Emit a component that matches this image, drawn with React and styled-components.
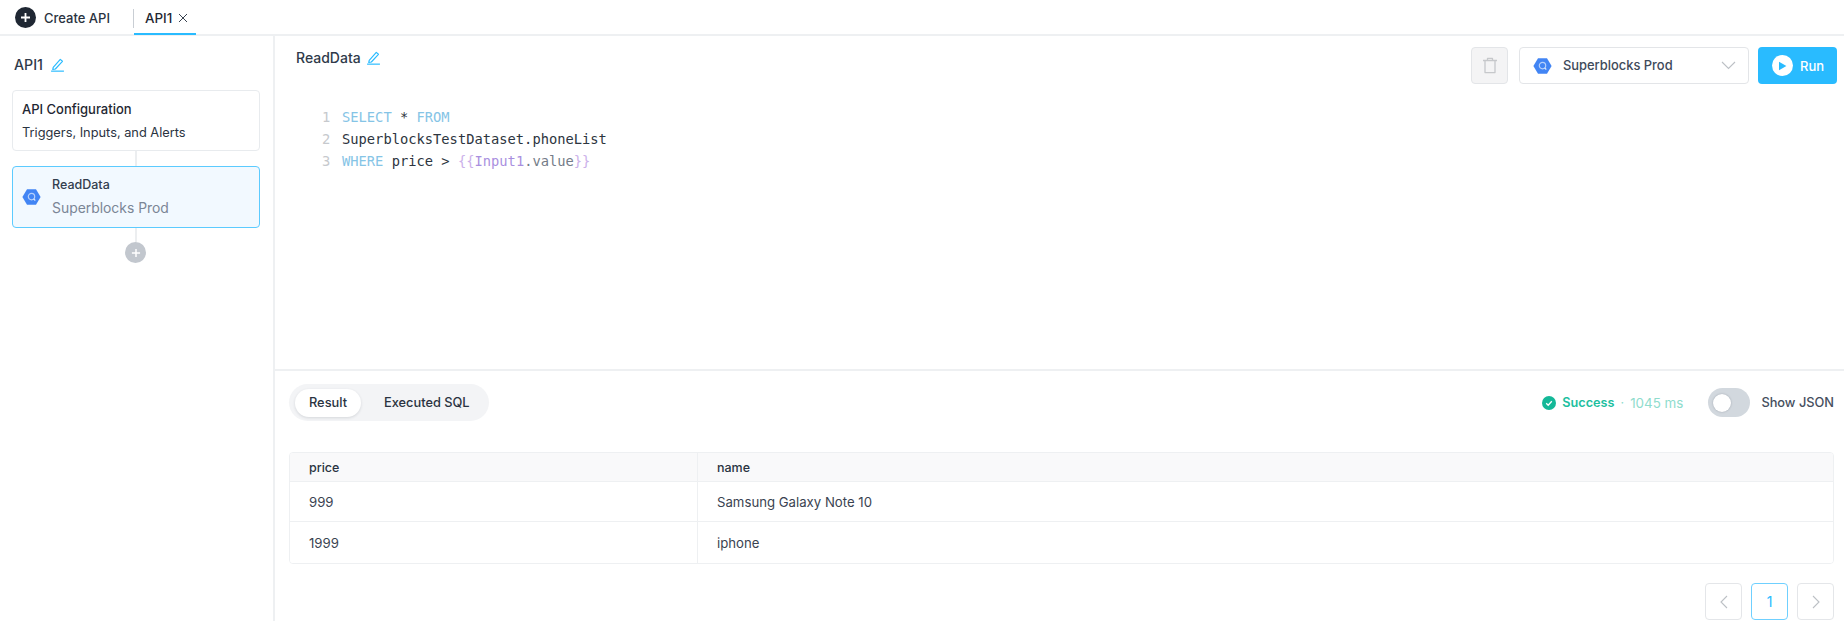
import React from "react";
import styled, { createGlobalStyle } from "styled-components";

const Global = createGlobalStyle`
  html, body { margin: 0; padding: 0; background: #fff; }
  body { font-family: Inter, "Noto Sans", sans-serif; color: #1f2733; -webkit-font-smoothing: antialiased; }
  * { box-sizing: border-box; }
`;

const Page = styled.div`
  width: 1844px; height: 621px; overflow: hidden; display: flex; flex-direction: column; background: #fff;
`;
const TopBar = styled.header`
  height: 36px; flex: none; display: flex; align-items: stretch; padding-left: 15px; border-bottom: 2px solid #eef0f2;
`;
const CreateBtn = styled.div`
  display: flex; align-items: center; gap: 8px; height: 34px; padding-top: 1px; font-size: 13px; font-weight: 500; color: #2a3341;
`;
const CreateIcon = styled.span`
  width: 21px; height: 21px; border-radius: 50%; background: #1f2733; display: flex; align-items: center; justify-content: center;
`;
const Divider = styled.span`
  width: 1px; height: 19px; background: #c9ced4; margin: 9px 0 0 23px;
`;
const ApiTab = styled.div`
  display: flex; align-items: center; gap: 6px; height: 35px; padding: 2px 0 0 11px; width: 62px;
  font-size: 13.4px; font-weight: 500; color: #1f2733; border-bottom: 2px solid #29bbff;
`;
const Body = styled.div`
  flex: 1; display: flex; min-height: 0;
`;
const Sidebar = styled.aside`
  width: 275px; flex: none; border-right: 2px solid #eef0f2; padding: 16px 13px 0 12px; display: flex; flex-direction: column;
`;
const SideTitle = styled.div`
  display: flex; align-items: center; gap: 7px; height: 24px; padding-left: 2px; margin-bottom: 14px; font-size: 14.2px; font-weight: 500; color: #2f3a4a;
`;
const Card = styled.div`
  height: ${p => (p.$active ? 62 : 61)}px; width: 248px; border-radius: 4px; padding: 8px 9px 0;
  border: ${p => (p.$active ? "1.5px solid #5ccbff" : "1px solid #e8ebee")};
  background: ${p => (p.$active ? "#f2f9ff" : "#fff")};
  ${p => p.$active && "display: flex; align-items: center; gap: 11px; padding: 0 9px;"}
`;
const CardTitle = styled.div`
  font-size: 13px; font-weight: 500; line-height: 21px; color: #1f2733;
`;
const CardText = styled.div`
  font-size: 12.8px; line-height: 26px; color: #2a3341;
`;
const NodeTitle = styled.div`
  font-size: 12.5px; font-weight: 500; line-height: 22px; color: #333e4e;
`;
const NodeSub = styled.div`
  font-size: 13.9px; line-height: 24px; color: #7b8696;
`;
const Connector = styled.div`
  width: 2px; height: ${p => p.$h}px; margin-left: 123px; background: #eceef0;
`;
const AddNode = styled.div`
  width: 21px; height: 21px; margin-left: 113px; border-radius: 50%; background: #c2c7ce; display: flex; align-items: center; justify-content: center;
`;
const Main = styled.main`
  flex: 1; min-width: 0; display: flex; flex-direction: column;
`;
const Editor = styled.section`
  height: 335px; flex: none; border-bottom: 2px solid #eef0f2; display: flex; flex-direction: column;
`;
const EditorHead = styled.div`
  display: flex; justify-content: space-between; align-items: flex-start; padding: 11px 7px 0 21px;
`;
const StepName = styled.div`
  display: flex; align-items: center; gap: 5px; height: 20px; font-size: 14px; font-weight: 500; color: #2f3a4a;
`;
const Controls = styled.div`
  display: flex; gap: 9px;
`;
const DeleteBtn = styled.div`
  width: 37px; height: 37px; margin-right: 2px; border-radius: 4px; border: 1px solid #e3e5e8; background: #f4f4f5; display: flex; align-items: center; justify-content: center;
`;
const Select = styled.div`
  width: 230px; height: 37px; border-radius: 4px; border: 1px solid #e3e5e8; padding: 0 12px 0 13px; display: flex; align-items: center; gap: 11px;
  font-size: 12.9px; font-weight: 500; color: #404a5a;
`;
const Grow = styled.span`
  flex: 1;
`;
const RunBtn = styled.div`
  width: 79px; height: 37px; border-radius: 4px; background: #29bbff; color: #fff; display: flex; align-items: center; gap: 7px; padding-left: 14px; font-size: 13px; font-weight: 500;
`;
const PlayDisc = styled.span`
  width: 21px; height: 21px; border-radius: 50%; background: #fff; display: flex; align-items: center; justify-content: center;
`;
const Code = styled.div`
  margin-top: 22px; padding-left: 47px; font-family: "DejaVu Sans Mono", "Liberation Mono", monospace; font-size: 13.75px; line-height: 22px; color: #2d3540;
`;
const CodeLine = styled.div`
  display: flex; height: 22px; white-space: pre;
`;
const LineNo = styled.span`
  width: 20px; color: #c6c9cd;
`;
const Kw = styled.span`
  color: #85c4e6;
`;
const Brace = styled.span`
  color: #cbb1ea;
`;
const Bind = styled.span`
  color: #a98fe0;
`;
const Muted = styled.span`
  color: #747c88;
`;
const Results = styled.section`
  flex: 1; min-height: 0; padding: 13px 10px 0 14px; display: flex; flex-direction: column;
`;
const ResultBar = styled.div`
  display: flex; align-items: center; justify-content: space-between; height: 37px;
`;
const Segmented = styled.div`
  width: 200px; height: 37px; border-radius: 19px; background: #f3f4f6; padding: 5px 6px; display: flex; align-items: center; gap: 13px;
`;
const Seg = styled.div`
  height: 28px; border-radius: 14px; padding: 0 ${p => (p.$on ? 14 : 10)}px; display: flex; align-items: center; font-size: 12.8px; font-weight: 500; color: #2a3341;
  ${p => p.$on && "background: #fff; box-shadow: 0 1px 3px rgba(30,40,60,.14);"}
`;
const StatusGroup = styled.div`
  display: flex; align-items: center; padding-right: 0;
`;
const Status = styled.span`
  display: flex; align-items: center; font-size: 12.7px; font-weight: 600; color: #1ebf9f; gap: 6px;
`;
const Dot = styled.span`
  color: #8fdccd; margin: 0 6px; font-size: 12.5px;
`;
const Ms = styled.span`
  font-size: 13.4px; color: #8fdccd;
`;
const Toggle = styled.span`
  width: 42px; height: 29px; border-radius: 15px; background: #d2d8de; margin-left: 25px; padding: 4px; display: flex; align-items: center;
`;
const Knob = styled.span`
  width: 18px; height: 18px; border-radius: 50%; background: #fff; box-shadow: 0 0 2px rgba(30,40,60,.3); margin-left: 1px;
`;
const ToggleLabel = styled.span`
  font-size: 12.8px; font-weight: 500; color: #454e5d; margin-left: 11px;
`;
const Table = styled.div`
  margin-top: 31px; width: 1545px; border: 1px solid #eef0f2; border-radius: 4px; overflow: hidden;
`;
const Row = styled.div`
  display: grid; grid-template-columns: 407px 1fr; height: ${p => p.$h}px;
  background: ${p => (p.$head ? "#f9f9fa" : "#fff")};
  border-bottom: ${p => (p.$last ? "none" : "1px solid #eef0f2")};
`;
const Cell = styled.div`
  display: flex; align-items: center; padding-left: 19px; font-size: ${p => (p.$head ? 12.5 : 13.2)}px; font-weight: ${p => (p.$head ? 500 : 400)}; color: ${p => (p.$head ? "#2a3341" : "#3a4351")};
  & + & { border-left: 1px solid #eef0f2; }
`;
const Pager = styled.div`
  display: flex; justify-content: flex-end; gap: 9px; margin-top: 19px; padding-right: 0;
`;
const PageBtn = styled.div`
  width: 37px; height: 37px; border-radius: 4px; border: ${p => (p.$on ? "1.5px solid #6fd0ff" : "1.5px solid #e4e6e9")};
  display: flex; align-items: center; justify-content: center; font-size: 14px; color: #29bbff;
`;

const Pencil = ({ size = 15 }) => (
  <svg width={size} height={size} viewBox="0 0 14 14" fill="none" stroke="#29bbff" strokeWidth="1.1" strokeLinejoin="round">
    <path d="M3 9.6 9.6 2.2l2 1.8-6.6 7.2-2.4.4z" />
    <path d="M1 13.2h12" />
  </svg>
);

const Hex = ({ size = 18 }) => (
  <svg width={size + 1} height={size} viewBox="0 0 19 18">
    <path d="M5 1.2h9l4.6 7.8L14 16.8H5L.4 9z" fill="#4285f4" />
    <circle cx="9.5" cy="8.6" r="3.2" fill="none" stroke="#b5d0fb" strokeWidth="1.2" />
    <path d="m11.6 10.8 1.7 1.7" stroke="#dce9fd" strokeWidth="1.2" />
  </svg>
);

const Close = () => (
  <svg width="10" height="10" viewBox="0 0 10 10" stroke="#3a4351" strokeWidth="1"><path d="m1 1 8 8M9 1 1 9" /></svg>
);

const Plus = ({ size = 11, w = 1.8 }) => (
  <svg width={size} height={size} viewBox="0 0 11 11" stroke="#fff" strokeWidth={w}><path d="M5.5 1v9M1 5.5h9" /></svg>
);

const Trash = () => (
  <svg width="16" height="17" viewBox="0 0 16 17" fill="none" stroke="#c6c8cb" strokeWidth="1.3" strokeLinejoin="round">
    <path d="M1 3.5h14M5.5 3.5V1.4h5v2.1M3 3.5v12.1h10V3.5" />
  </svg>
);

const Chevron = ({ d = "m1 1 6.5 6.5L14 1", w = 15, h = 9 }) => (
  <svg width={w} height={h} viewBox={`0 0 ${w} ${h}`} fill="none" stroke="#bcc0c5" strokeWidth="1.1"><path d={d} /></svg>
);

export default function App() {
  return (
    <Page>
      <Global />
      <TopBar>
        <CreateBtn>
          <CreateIcon><Plus /></CreateIcon>
          Create API
        </CreateBtn>
        <Divider />
        <ApiTab>API1 <Close /></ApiTab>
      </TopBar>
      <Body>
        <Sidebar>
          <SideTitle>API1 <Pencil /></SideTitle>
          <Card>
            <CardTitle>API Configuration</CardTitle>
            <CardText>Triggers, Inputs, and Alerts</CardText>
          </Card>
          <Connector $h={15} />
          <Card $active>
            <Hex />
            <div>
              <NodeTitle>ReadData</NodeTitle>
              <NodeSub>Superblocks Prod</NodeSub>
            </div>
          </Card>
          <Connector $h={14} />
          <AddNode><Plus size={10} w={1.6} /></AddNode>
        </Sidebar>
        <Main>
          <Editor>
            <EditorHead>
              <StepName>ReadData <Pencil /></StepName>
              <Controls>
                <DeleteBtn><Trash /></DeleteBtn>
                <Select>
                  <Hex />
                  <span>Superblocks Prod</span>
                  <Grow />
                  <Chevron />
                </Select>
                <RunBtn>
                  <PlayDisc>
                    <svg width="9" height="10" viewBox="0 0 9 10"><path d="M1 .8v8.4L8.4 5z" fill="#29bbff" /></svg>
                  </PlayDisc>
                  Run
                </RunBtn>
              </Controls>
            </EditorHead>
            <Code>
              <CodeLine><LineNo>1</LineNo><span><Kw>SELECT</Kw> * <Kw>FROM</Kw></span></CodeLine>
              <CodeLine><LineNo>2</LineNo><span>SuperblocksTestDataset.phoneList</span></CodeLine>
              <CodeLine><LineNo>3</LineNo><span><Kw>WHERE</Kw> price &gt; <Brace>{"{{"}</Brace><Bind>Input1</Bind><Muted>.value</Muted><Brace>{"}}"}</Brace></span></CodeLine>
            </Code>
          </Editor>
          <Results>
            <ResultBar>
              <Segmented>
                <Seg $on>Result</Seg>
                <Seg>Executed SQL</Seg>
              </Segmented>
              <StatusGroup>
                <Status>
                  <svg width="14" height="14" viewBox="0 0 14 14">
                    <circle cx="7" cy="7" r="7" fill="#14b898" />
                    <path d="m4.2 7.2 2 2 3.6-4" fill="none" stroke="#fff" strokeWidth="1.3" />
                  </svg>
                  Success
                </Status>
                <Dot>·</Dot>
                <Ms>1045 ms</Ms>
                <Toggle><Knob /></Toggle>
                <ToggleLabel>Show JSON</ToggleLabel>
              </StatusGroup>
            </ResultBar>
            <Table>
              <Row $head $h={29}><Cell $head>price</Cell><Cell $head>name</Cell></Row>
              <Row $h={40}><Cell>999</Cell><Cell>Samsung Galaxy Note 10</Cell></Row>
              <Row $last $h={41}><Cell>1999</Cell><Cell>iphone</Cell></Row>
            </Table>
            <Pager>
              <PageBtn><Chevron d="M7 1 1 7l6 6" w={8} h={14} /></PageBtn>
              <PageBtn $on>1</PageBtn>
              <PageBtn><Chevron d="m1 1 6 6-6 6" w={8} h={14} /></PageBtn>
            </Pager>
          </Results>
        </Main>
      </Body>
    </Page>
  );
}
